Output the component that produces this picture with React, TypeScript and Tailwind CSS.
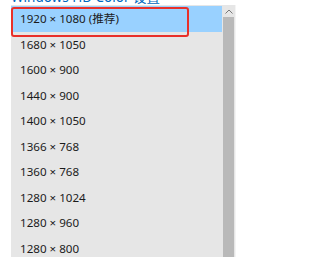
const rows = [
  "1920 × 1080 (推荐)",
  "1680 × 1050",
  "1600 × 900",
  "1440 × 900",
  "1400 × 1050",
  "1366 × 768",
  "1360 × 768",
  "1280 × 1024",
  "1280 × 960",
  "1280 × 800",
];

export default function App() {
  return (
    <div
      className="relative w-[332px] h-[257px] overflow-hidden bg-white"
      style={{ fontFamily: '"Noto Sans", "Noto Sans CJK SC", sans-serif' }}
    >
      <div className="h-[5px] overflow-hidden">
        <div className="-mt-[11px] pl-[11px] text-[13.5px] leading-[16px] text-[#0067c0]">
          Windows HD Color 设置
        </div>
      </div>
      <div className="ml-[11px] w-[225px] h-[252px] flex bg-[#e6e6e6] border-r border-[#f4f4f4]">
        <div className="flex-1 pt-[1px]">
          {rows.map((r, i) => (
            <div
              key={r}
              className={
                "h-[25.5px] flex items-center pl-[9px] text-[11.6px] text-[#1b1b1b] " +
                (i === 0 ? "bg-[#99d1ff]" : "")
              }
            >
              {r}
            </div>
          ))}
        </div>
        <div className="w-[13px] flex flex-col">
          <div className="h-[12px] flex items-center justify-center bg-[#e6e6e6]">
            <svg width="8" height="5" viewBox="0 0 8 5">
              <path d="M0.5 4.5 L4 1 L7.5 4.5" fill="none" stroke="#777" strokeWidth="1" />
            </svg>
          </div>
          <div className="flex-1 mx-[1px] bg-[#b9b9b9]" />
        </div>
      </div>
      <div className="absolute left-[11px] top-[7px] w-[178px] h-[30px] border-2 border-[#e8302a] rounded-[3px]" />
    </div>
  );
}
